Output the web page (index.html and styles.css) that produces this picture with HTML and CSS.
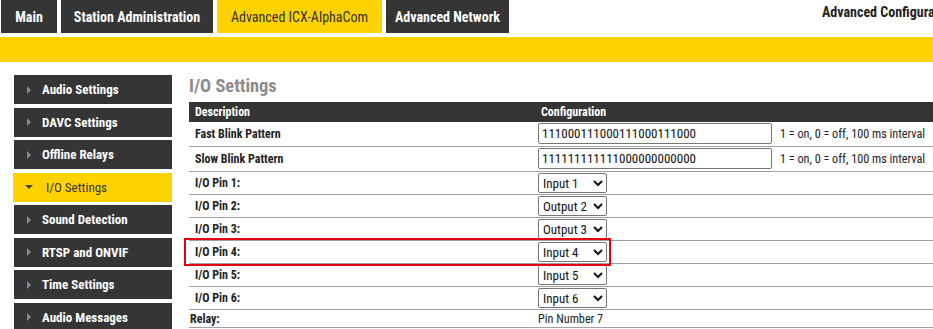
FILE: index.html
```html
<!DOCTYPE html>
<html>
<head>
<meta charset="utf-8">
<link rel="stylesheet" href="styles.css">
</head>
<body>
<header class="topnav">
  <a class="tab">Main</a>
  <a class="tab">Station Administration</a>
  <a class="tab tab-active">Advanced ICX-AlphaCom</a>
  <a class="tab">Advanced Network</a>
  <div class="page-title">Advanced Configuration</div>
</header>
<div class="yellow-bar"></div>
<div class="main">
  <nav class="sidebar">
    <div class="side-item"><span class="tri"></span>Audio Settings</div>
    <div class="side-item"><span class="tri"></span>DAVC Settings</div>
    <div class="side-item"><span class="tri"></span>Offline Relays</div>
    <div class="side-item side-active"><span class="tri-down"></span>I/O Settings</div>
    <div class="side-item"><span class="tri"></span>Sound Detection</div>
    <div class="side-item"><span class="tri"></span>RTSP and ONVIF</div>
    <div class="side-item"><span class="tri"></span>Time Settings</div>
    <div class="side-item"><span class="tri"></span>Audio Messages</div>
  </nav>
  <section class="content">
    <h1 class="heading">I/O Settings</h1>
    <table class="cfg">
      <thead>
        <tr><th class="c1">Description</th><th class="c2">Configuration</th></tr>
      </thead>
      <tbody>
        <tr class="row-input"><td class="lbl">Fast Blink Pattern</td><td class="val"><input class="pattern" type="text" value="111000111000111000111000"><span class="hint">1 = on, 0 = off, 100 ms interval</span></td></tr>
        <tr class="row-input"><td class="lbl">Slow Blink Pattern</td><td class="val"><input class="pattern" type="text" value="111111111111000000000000"><span class="hint">1 = on, 0 = off, 100 ms interval</span></td></tr>
        <tr class="row-pin"><td class="lbl">I/O Pin 1:</td><td class="val"><select class="pin"><option selected>Input 1</option><option>Output 1</option></select></td></tr>
        <tr class="row-pin"><td class="lbl">I/O Pin 2:</td><td class="val"><select class="pin"><option>Input 2</option><option selected>Output 2</option></select></td></tr>
        <tr class="row-pin"><td class="lbl">I/O Pin 3:</td><td class="val"><select class="pin"><option>Input 3</option><option selected>Output 3</option></select></td></tr>
        <tr class="row-pin"><td class="lbl">I/O Pin 4:</td><td class="val"><select class="pin"><option selected>Input 4</option><option>Output 4</option></select></td></tr>
        <tr class="row-pin"><td class="lbl">I/O Pin 5:</td><td class="val"><select class="pin"><option selected>Input 5</option><option>Output 5</option></select></td></tr>
        <tr class="row-pin"><td class="lbl">I/O Pin 6:</td><td class="val"><select class="pin"><option selected>Input 6</option><option>Output 6</option></select></td></tr>
        <tr class="row-relay"><td class="lbl lbl-relay">Relay:</td><td class="val val-text">Pin Number 7</td></tr>
      </tbody>
    </table>
    <div class="highlight"></div>
  </section>
</div>
</body>
</html>
```
FILE: styles.css
```css
html, body {
  margin: 0;
  padding: 0;
  overflow: hidden;
}
body {
  font-family: Roboto, "Liberation Sans", sans-serif;
  font-stretch: 82%;
  color: #222;
  background: #fff;
  width: 933px;
}
.topnav {
  display: flex;
  align-items: flex-start;
  gap: 4px;
  padding-left: 1px;
  height: 33px;
}
.tab {
  display: flex;
  align-items: center;
  justify-content: center;
  height: 33px;
  background: #353535;
  color: #fff;
  font-size: 14px;
  font-weight: 700;
  box-sizing: border-box;
}
.tab:nth-child(1) { width: 56px; }
.tab:nth-child(2) { width: 152px; }
.tab:nth-child(3) { width: 165px; }
.tab:nth-child(4) { width: 123px; }
.tab-active {
  background: #ffd200;
  color: #333;
  font-weight: 400;
}
.page-title {
  margin-left: auto;
  width: 111px;
  white-space: nowrap;
  overflow: hidden;
  font-size: 14px;
  font-weight: 700;
  color: #222;
  line-height: 24px;
}
.yellow-bar {
  margin-top: 4px;
  height: 25px;
  background: #ffd200;
}
.main {
  display: flex;
  gap: 17px;
  padding-left: 14px;
  margin-top: 13px;
}
.sidebar {
  display: flex;
  flex-direction: column;
  gap: 3.5px;
  width: 158px;
  flex-shrink: 0;
}
.side-item {
  display: flex;
  align-items: center;
  height: 29px;
  background: #353535;
  color: #fff;
  font-size: 13px;
  font-weight: 700;
  box-sizing: border-box;
}
.tri {
  width: 0;
  height: 0;
  border-top: 4px solid transparent;
  border-bottom: 4px solid transparent;
  border-left: 4px solid #8a8a8a;
  margin-left: 13px;
  margin-right: 11px;
}
.side-active {
  background: #ffd200;
  color: #333;
  font-weight: 400;
  margin-left: -1px;
}
.tri-down {
  width: 0;
  height: 0;
  border-left: 4px solid transparent;
  border-right: 4px solid transparent;
  border-top: 4px solid #444;
  margin-left: 12px;
  margin-right: 13px;
}
.content {
  position: relative;
  flex: 1;
}
.heading {
  margin: 0;
  font-size: 18.4px;
  font-weight: 700;
  color: #8c8c8c;
  line-height: 21px;
  height: 27px;
}
.cfg {
  width: 100%;
  border-collapse: collapse;
  font-size: 12px;
}
.cfg th {
  background: #353535;
  color: #fff;
  font-weight: 700;
  text-align: left;
  height: 20px;
  padding: 0;
}
.cfg th.c1 { padding-left: 6px; width: 342px; }
.cfg th.c2 { padding-left: 4px; }
.cfg td {
  border-bottom: 1px solid #a0a0a0;
  padding: 0;
}
.lbl {
  font-weight: 700;
  padding-left: 6px !important;
}
.lbl-relay { padding-left: 1px !important; }
.row-input td { height: 24px; vertical-align: top; }
.row-input .lbl { vertical-align: middle; }
.val {
  padding-left: 1px !important;
}
.pattern {
  width: 234px;
  height: 21px;
  box-sizing: border-box;
  margin: 1px 0 0 0;
  border: 1px solid #767676;
  border-radius: 2px;
  padding: 0 3px;
  font-family: Roboto, sans-serif;
  font-stretch: 82%;
  font-size: 13px;
  color: #111;
}
.hint {
  display: inline-block;
  margin-left: 8px;
  font-size: 12.2px;
  line-height: 24px;
  vertical-align: top;
}
.row-pin td { height: 22px; }
.pin {
  width: 69px;
  height: 20px;
  margin: 1px 0;
  font-family: Roboto, sans-serif;
  font-stretch: 82%;
  font-size: 13px;
  color: #111;
  border: 1px solid #767676;
  border-radius: 2px;
  background: #fff;
  display: block;
}
.row-relay td { height: 17px; }
.val-text { font-size: 12.2px; }
.highlight {
  position: absolute;
  left: -5px;
  top: 163px;
  width: 427px;
  height: 28px;
  box-sizing: border-box;
  border: 2px solid #e3000f;
  pointer-events: none;
}
```
